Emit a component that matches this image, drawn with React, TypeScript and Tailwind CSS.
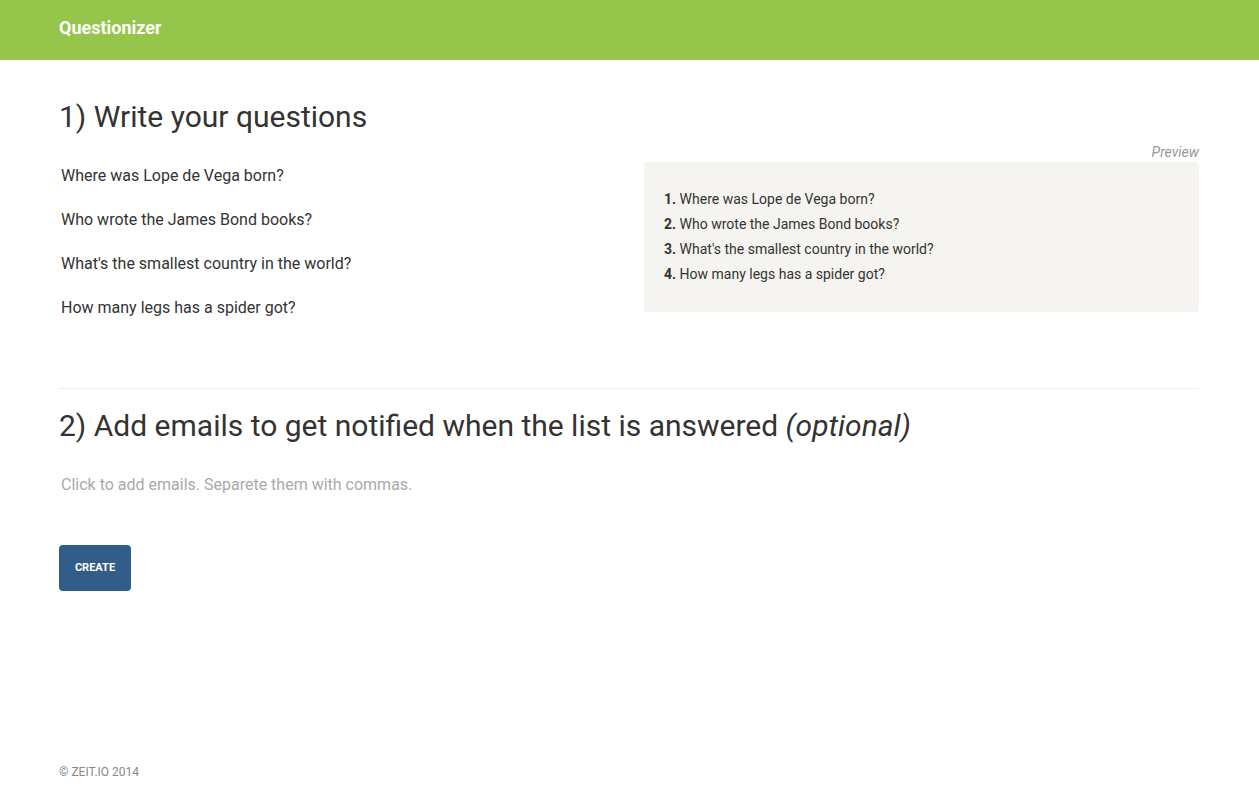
export default function App() {
  const qs = [
    "Where was Lope de Vega born?",
    "Who wrote the James Bond books?",
    "What's the smallest country in the world?",
    "How many legs has a spider got?",
  ];
  return (
    <div className="min-h-[788px] bg-white text-[#333] flex flex-col" style={{ fontFamily: "Roboto, 'Liberation Sans', sans-serif" }}>
      <header className="h-[60px] bg-[#95c54b] flex items-center">
        <div className="w-[1140px] ml-[59px] pb-[6px]">
          <span className="text-white text-[18px] font-bold">Questionizer</span>
        </div>
      </header>
      <main className="w-[1140px] ml-[59px] flex-1">
        <h1 className="text-[30px] leading-[36px] mt-[39px] mb-[16px]">1) Write your questions</h1>
        <div className="flex">
          <div className="w-[585px] pl-[2px] pt-[13px]">
            {qs.map((q) => (
              <div key={q} className="text-[16px] h-[44px] leading-[24px]">{q}</div>
            ))}
          </div>
          <div className="flex-1">
            <div className="text-right text-[14px] italic text-[#999] leading-[20px] mt-[-9px]">Preview</div>
            <div className="bg-[#f6f4f0] rounded-[4px] h-[150px] pt-[25px] pl-[20px] text-[14px]">
              {qs.map((q, i) => (
                <div key={q} className="h-[25px] leading-[25px]"><b>{i + 1}.</b> {q}</div>
              ))}
            </div>
          </div>
        </div>
        <hr className="border-0 border-t border-[#eee] mt-[48px]" />
        <h2 className="text-[30px] leading-[36px] mt-[19px]">
          2) Add emails to get notified when the list is answered <i>(optional)</i>
        </h2>
        <div className="text-[16px] text-[#aaa] mt-[29px] pl-[2px] leading-[24px]">Click to add emails. Separete them with commas.</div>
        <button className="mt-[48px] bg-[#325d88] text-white text-[11px] font-bold rounded-[4px] w-[72px] h-[46px]">CREATE</button>
      </main>
      <footer className="w-[1140px] ml-[59px] text-[12px] text-[#888] pb-[7px]">© ZEIT.IO 2014</footer>
    </div>
  );
}
